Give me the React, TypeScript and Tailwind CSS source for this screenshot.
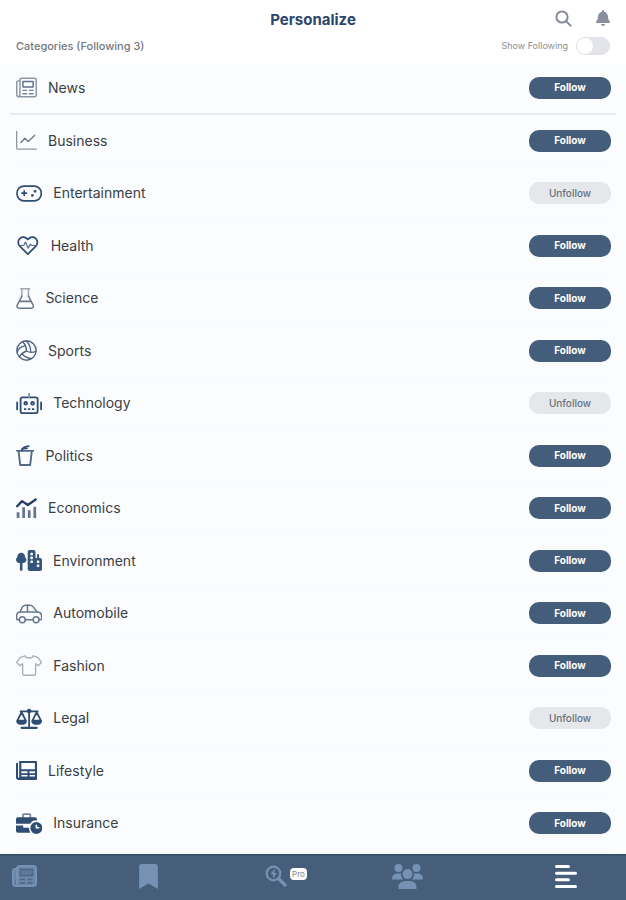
import type { ReactNode } from "react";
import { useState } from "react";
import { FaBell, FaBookmark } from "react-icons/fa";
import { FaTreeCity } from "react-icons/fa6";

type IconProps = {
  width?: number;
  color?: string;
  stroke?: number;
  children: ReactNode;
};

// All icons share the same 512 unit height, only the width differs
function Icon({ width = 512, color = "#2f4d73", stroke = 32, children }: IconProps) {
  return (
    <svg
      className="h-[21px] w-auto shrink-0"
      viewBox={`0 0 ${width} 512`}
      fill="none"
      stroke={color}
      strokeWidth={stroke}
      strokeLinecap="round"
      strokeLinejoin="round"
      aria-hidden="true"
    >
      {children}
    </svg>
  );
}

const categories = [
  {
    name: "Business",
    icon: (
      <Icon color="#8f97a3">
        <path d="M16 32v400q0 36 36 36h444" />
        <path stroke="#69778a" d="M120 304l96-104 84 78 156-150" />
      </Icon>
    ),
  },
  {
    name: "Entertainment",
    following: true,
    icon: (
      <Icon width={640} stroke={40}>
        <rect x="24" y="76" width="592" height="360" rx="172" />
        <path d="M200 192v112M144 248h112" />
        <circle cx="464" cy="204" r="16" fill="#2f4d73" />
        <circle cx="400" cy="304" r="14" fill="#2f4d73" />
      </Icon>
    ),
  },
  {
    name: "Health",
    icon: (
      <Icon width={576} stroke={42}>
        <path d="M288 110C230 44 150 36 98 82C34 138 48 226 92 272L288 468L484 272C528 226 542 138 478 82C426 36 346 44 288 110Z" />
        <path stroke="#53698a" strokeWidth="30" d="M76 256h112l44-84 66 150 52-102 26 36h112" />
      </Icon>
    ),
  },
  {
    name: "Science",
    icon: (
      <Icon width={448} color="#69778c" stroke={36}>
        <path stroke="#a0a7b1" d="M116 18h216M144 18v184M304 18v184" />
        <path d="M144 196L30 416c-18 36 4 78 44 78h300c40 0 62-42 44-78L304 196" />
        <path strokeWidth="40" d="M96 326h256" />
      </Icon>
    ),
  },
  {
    name: "Sports",
    icon: (
      <Icon color="#526580" stroke={34}>
        <circle cx="256" cy="256" r="236" />
        <path d="M256 268C252 180 220 90 160 46M256 268C180 300 104 364 84 410M256 268C330 310 410 310 486 276" />
        <path d="M28 300C50 220 120 160 222 144M250 24c70 60 106 130 110 266M150 340c60 70 130 100 228 114" />
      </Icon>
    ),
  },
  {
    name: "Technology",
    following: true,
    icon: (
      <Icon width={640} stroke={44}>
        <rect x="112" y="108" width="416" height="384" rx="48" />
        <path stroke="#8390a5" d="M320 16v84" />
        <path strokeWidth="44" d="M28 232v168M612 232v168" />
        <circle cx="236" cy="248" r="34" />
        <circle cx="404" cy="248" r="34" />
        <path strokeLinecap="butt" d="M196 394h56M292 394h56M388 394h56" />
      </Icon>
    ),
  },
  {
    name: "Politics",
    icon: (
      <Icon width={448} color="#526985">
        <path strokeWidth="40" d="M20 142h408" />
        <path strokeWidth="46" d="M64 154l38 332h244l38-332" />
        <path stroke="#2f4d73" strokeWidth="46" d="M140 132c4-60 52-78 168-104" />
        <path stroke="#2f4d73" strokeWidth="34" d="M176 92l94-8" />
      </Icon>
    ),
  },
  {
    name: "Economics",
    icon: (
      <Icon stroke={56}>
        <path stroke="#263c66" d="M28 200L148 76L288 170L480 36" />
        <path stroke="#66748f" strokeWidth="66" strokeLinecap="butt" d="M50 348v140M186 228v260M322 296v192M458 212v276" />
      </Icon>
    ),
  },
  {
    name: "Environment",
    icon: <FaTreeCity className="h-[21px] w-[26px] shrink-0 text-[#35547a]" />,
  },
  {
    name: "Automobile",
    icon: (
      <Icon width={640} color="#66768c" stroke={36}>
        <path d="M78 408H46c-18 0-30-12-30-30v-72c0-50 32-82 82-86l52-112c14-36 38-52 78-52h112c34 0 58 12 78 38l98 126c66 4 108 38 108 96v62c0 18-12 30-30 30h-28" />
        <path d="M98 220h418M280 60v160" />
        <path d="M230 408h184" />
        <circle cx="154" cy="408" r="72" />
        <circle cx="490" cy="408" r="72" />
      </Icon>
    ),
  },
  {
    name: "Fashion",
    icon: (
      <Icon width={640} color="#a9adb3">
        <path d="M220 18C246 92 394 92 420 18L538 64L622 182L540 262L478 212V460Q478 494 444 494H196Q162 494 162 460V212L100 262L18 182L102 64Z" />
      </Icon>
    ),
  },
  {
    name: "Legal",
    following: true,
    icon: (
      <Icon width={640} stroke={44}>
        <path d="M112 84h416M320 44v420" />
        <path strokeWidth="52" d="M136 484h368" />
        <path d="M136 104L32 306h208ZM504 104L400 306h208Z" />
        <path fill="#2f4d73" d="M28 324c14 84 202 84 216 0ZM396 324c14 84 202 84 216 0Z" />
        <circle cx="320" cy="76" r="34" fill="#2f4d73" />
      </Icon>
    ),
  },
  {
    name: "Lifestyle",
    icon: (
      <Icon stroke={52}>
        <path d="M104 48h384v412H64q-40 0-40-40V96" />
        <path d="M104 48v370q0 30-30 40" />
        <path strokeWidth="48" d="M112 252h368M112 344h368M112 424h368M304 262v160" />
      </Icon>
    ),
  },
  {
    name: "Insurance",
    icon: (
      <Icon width={640}>
        <path stroke="#7b8799" strokeWidth="44" d="M168 110V52q0-26 26-26h130q26 0 26 26v58" />
        <path
          stroke="none"
          fill="#2f4d73"
          d="M48 104h416q48 0 48 48v30q-110-16-168 82H0V152q0-48 48-48ZM0 304h176v56h140q0 62 32 120H48q-48 0-48-48Z"
        />
        <path stroke="none" fill="#2f4d73" fillRule="evenodd" d="M496 220a146 146 0 1 1 0 292a146 146 0 1 1 0-292ZM476 284v96h92v-36h-52v-60Z" />
      </Icon>
    ),
  },
];

function NewsIcon() {
  return (
    <Icon color="#8d96a3" stroke={36}>
      <path d="M96 96H52q-34 0-34 34v296q0 54 52 54h376q48 0 48-48V80q0-48-48-48H144q-48 0-48 48v350q0 50-46 50" />
      <rect x="168" y="108" width="250" height="138" rx="10" stroke="#63708a" />
      <path stroke="#76839a" d="M168 326h90M328 326h90M168 410h90M328 410h90" />
    </Icon>
  );
}

type FollowButtonProps = {
  name: string;
  following: boolean;
  onClick: () => void;
};

function FollowButton({ name, following, onClick }: FollowButtonProps) {
  return (
    <button
      type="button"
      onClick={onClick}
      aria-label={`${following ? "Unfollow" : "Follow"} ${name}`}
      className={
        following
          ? "h-[22px] w-[82px] rounded-[10px] bg-[#e5e7eb] text-[10px] font-medium text-[#69717d]"
          : "h-[22px] w-[82px] rounded-[10px] bg-[#435d7b] text-[10px] font-bold text-white"
      }
    >
      {following ? "Unfollow" : "Follow"}
    </button>
  );
}

export default function App() {
  const [followed, setFollowed] = useState<string[]>(
    categories.filter((c) => c.following).map((c) => c.name)
  );

  const toggle = (name: string) => {
    setFollowed(
      followed.includes(name)
        ? followed.filter((n) => n !== name)
        : [...followed, name]
    );
  };

  return (
    <div className="flex min-h-screen flex-col bg-[#fafcfe] font-['Inter',sans-serif]">
      {/* Header */}
      <header className="bg-white px-4 pb-2">
        <div className="grid h-9 grid-cols-[1fr_auto_1fr] items-center pt-1">
          <h1 className="col-start-2 text-[15px] font-bold text-[#2c466b]">Personalize</h1>
          <div className="flex items-center justify-end gap-6 pb-1">
            <button type="button" aria-label="Search">
              <svg className="size-[17px]" viewBox="0 0 17 17" fill="none" stroke="#858b98" strokeWidth="2" strokeLinecap="round">
                <circle cx="7" cy="7" r="5.6" />
                <path d="M11.2 11.2L15.6 15.6" />
              </svg>
            </button>
            <button type="button" aria-label="Notifications">
              <FaBell className="h-4 w-[14px] text-[#8a8fa0]" />
            </button>
          </div>
        </div>
        <div className="flex h-5 items-center justify-between">
          <h2 className="text-[11px] leading-4 font-medium text-[#73777f]">
            Categories (Following {followed.length})
          </h2>
          <label className="flex items-center gap-2 text-[9px] text-[#8b8e94]">
            Show Following
            <input
              type="checkbox"
              className="h-[18px] w-[34px] appearance-none rounded-full border border-[#e2e3e8] bg-[#e4e5ea] before:block before:size-4 before:rounded-full before:bg-white checked:bg-[#435d7b] checked:before:ml-4"
            />
          </label>
        </div>
      </header>

      {/* Categories */}
      <main className="flex flex-1 flex-col pb-1">
        <div className="mx-[10px] flex h-[51px] items-center justify-between border-b-2 border-[#e9ebee] pr-[5px] pb-[2px] pl-[6px]">
          <div className="flex items-center gap-[11px] text-sm text-[#3b3e44]">
            <NewsIcon />
            News
          </div>
          <FollowButton name="News" following={followed.includes("News")} onClick={() => toggle("News")} />
        </div>
        <ul className="flex flex-1 flex-col pr-[15px] pl-4">
          {categories.map((category) => (
            <li
              key={category.name}
              className="flex min-h-12 flex-1 items-center justify-between border-b border-[#f7f9fb]"
            >
              <div className="flex items-center gap-[11px] text-sm text-[#3b3e44]">
                {category.icon}
                {category.name}
              </div>
              <FollowButton
                name={category.name}
                following={followed.includes(category.name)}
                onClick={() => toggle(category.name)}
              />
            </li>
          ))}
        </ul>
      </main>

      {/* Bottom navigation */}
      <nav className="grid h-[46px] grid-cols-[127fr_126fr_127fr_163fr_71fr] items-center border-t-2 border-[#38526f] bg-[#465e7a] pb-1 pl-3 text-[#7591b3]">
        <a href="#news" aria-label="News">
          <svg className="h-[22px] w-[25px]" viewBox="0 0 25 22" fill="none" stroke="#7591b3" strokeWidth="2" aria-hidden="true">
            <path d="M5 4H3Q1 4 1 6v12q0 3 3 3h17q3 0 3-3V4q0-3-3-3H8Q5 1 5 4v14q0 3-2 3" fill="#6a86a9" />
            <path d="M8.5 4.500h12v6h-12z" fill="#5e7a9c" stroke="#4c6685" strokeWidth="1.500" />
            <path stroke="#4c6685" strokeWidth="1.500" d="M8 14.500h5M15.500 14.500h5M8 18h5M15.500 18h5" />
          </svg>
        </a>
        <a href="#saved" aria-label="Saved">
          <FaBookmark className="h-[25px] w-[19px]" />
        </a>
        <a href="#pro" aria-label="Pro search" className="flex items-center gap-[3px]">
          <svg className="size-[22px]" viewBox="0 0 22 22" fill="none" stroke="currentColor" aria-hidden="true">
            <circle cx="8.500" cy="8.500" r="6.800" strokeWidth="2.200" />
            <path d="M14 14l6 6" strokeWidth="3.400" strokeLinecap="round" />
            <path d="M10 3.500L5.500 9H8v4.500L12 8H9.500Z" fill="currentColor" stroke="none" />
          </svg>
          <span className="mb-1 flex h-3 w-[17px] items-center justify-center rounded bg-white text-[8px] text-[#7d858f]">
            Pro
          </span>
        </a>
        <a href="#community" aria-label="Community">
          <svg className="h-[25px] w-[31px]" viewBox="0 0 31 25" fill="currentColor" aria-hidden="true">
            <circle cx="6.500" cy="4" r="4" />
            <circle cx="24.500" cy="4" r="4" />
            <circle cx="15.500" cy="10" r="5" />
            <path d="M0 15.500Q0 9.500 5 9.500h4.200q-.8 3.200 2 6ZM31 15.500q0-6-5-6h-4.200q.8 3.200-2 6ZM6.500 25v-1.500q0-6.500 7-6.500h4q7 0 7 6.500V25Z" />
          </svg>
        </a>
        <a href="#categories" aria-label="Categories" aria-current="page">
          <svg className="h-[23px] w-[22px]" viewBox="0 0 22 23" fill="none" stroke="#fff" strokeWidth="3" strokeLinecap="round" aria-hidden="true">
            <path d="M1.500 1.500h12M1.500 8.200h19M1.500 14.800h12M1.500 21.500h19" />
          </svg>
        </a>
      </nav>
    </div>
  );
}
